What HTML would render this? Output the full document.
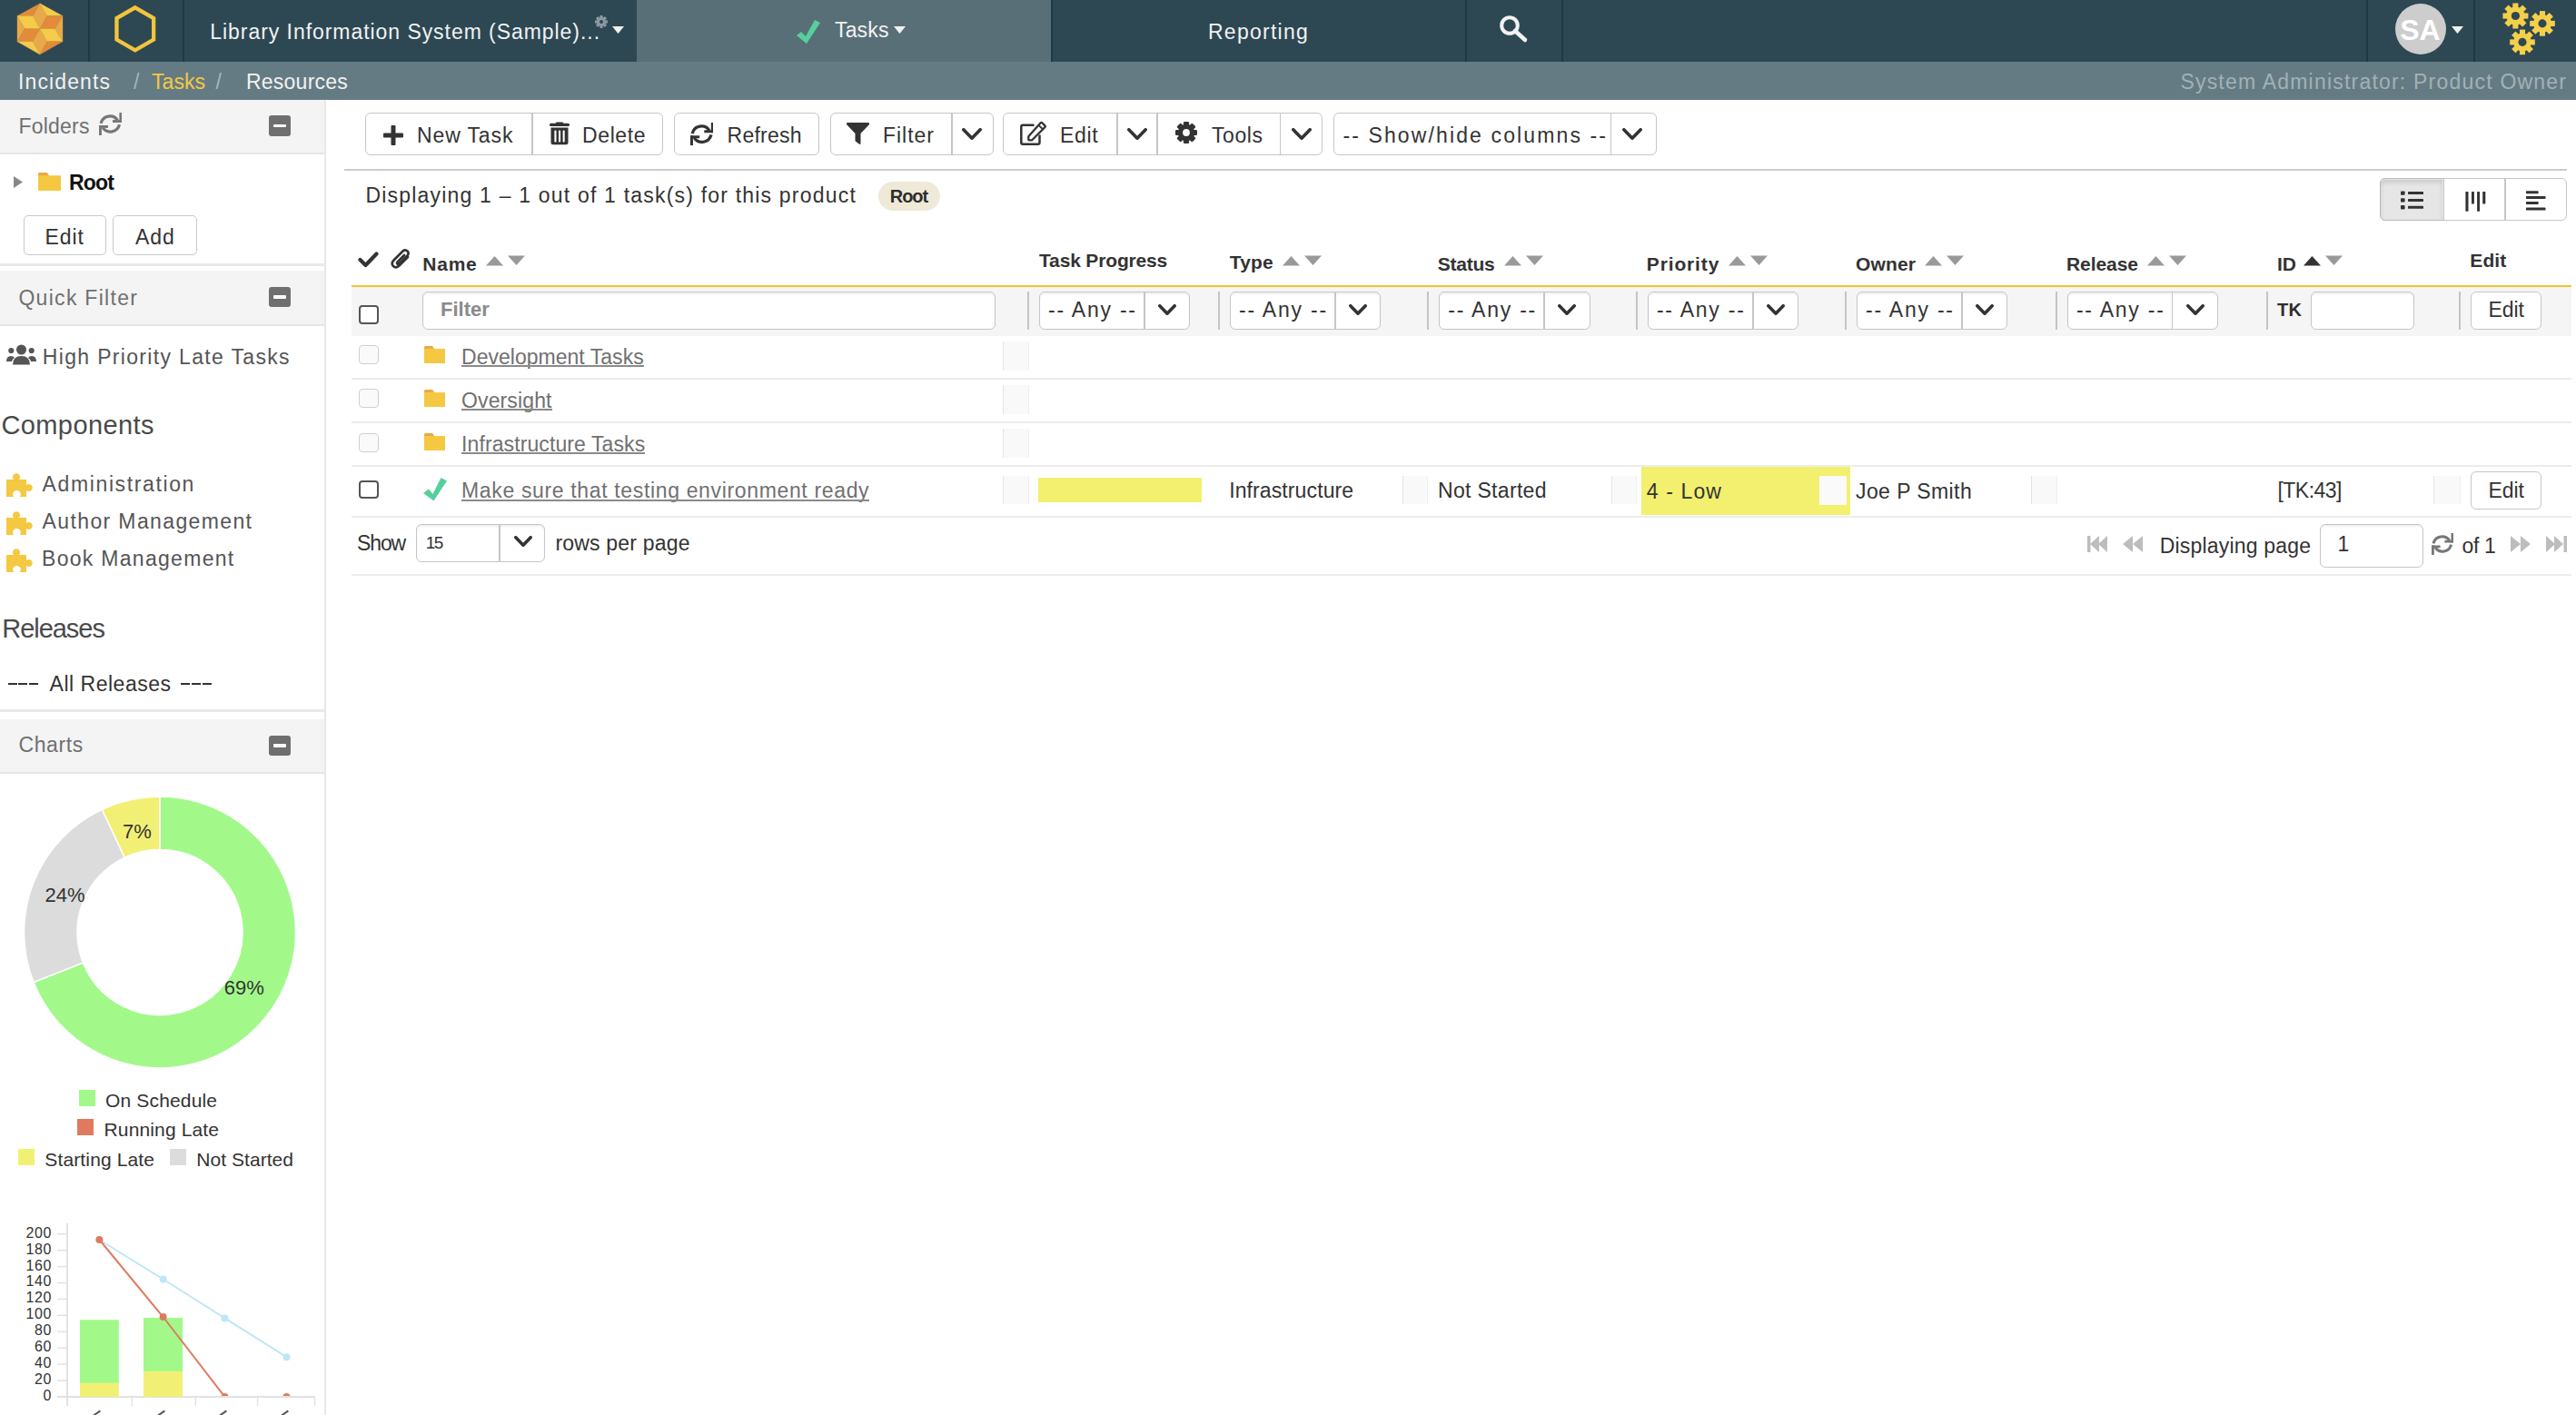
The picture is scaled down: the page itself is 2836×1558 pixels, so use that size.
<!DOCTYPE html><html><head><meta charset="utf-8"><style>
html,body{margin:0;padding:0;width:2836px;height:1558px;overflow:hidden;background:#fff;position:relative}
.t{position:absolute;white-space:nowrap;line-height:1;font-family:"Liberation Sans",sans-serif}
.r{position:absolute}
</style></head><body>
<div class="r" style="left:0px;top:0px;width:2836.00px;height:68.00px;background:#2d4853;"></div>
<div class="r" style="left:701px;top:0px;width:456.00px;height:68.00px;background:#586f78;"></div>
<div class="r" style="left:97px;top:0px;width:2.00px;height:68.00px;background:#1f3a46;"></div>
<div class="r" style="left:201px;top:0px;width:2.00px;height:68.00px;background:#1f3a46;"></div>
<div class="r" style="left:1157px;top:0px;width:2.00px;height:68.00px;background:#1f3a46;"></div>
<div class="r" style="left:1613px;top:0px;width:2.00px;height:68.00px;background:#1f3a46;"></div>
<div class="r" style="left:1719px;top:0px;width:2.00px;height:68.00px;background:#1f3a46;"></div>
<div class="r" style="left:2605px;top:0px;width:2.00px;height:68.00px;background:#1f3a46;"></div>
<div class="r" style="left:2723px;top:0px;width:2.00px;height:68.00px;background:#1f3a46;"></div>
<svg class="r" style="left:0px;top:0px;" width="90" height="68" viewBox="0 0 90 68"><polygon points="44,3.8 52,17.6 44,31.7 36,17.6" fill="#e8aa49" stroke="#e8aa49" stroke-width="0.3"/><polygon points="19,17.6 44,3.8 36,17.6" fill="#e38b3b" stroke="#e38b3b" stroke-width="0.3"/><polygon points="19,17.6 36,17.6 44,31.7 27.5,31.7" fill="#f4cc4a" stroke="#f4cc4a" stroke-width="0.3"/><polygon points="19,17.6 27.5,31.7 19,45.8" fill="#e8aa49" stroke="#e8aa49" stroke-width="0.3"/><polygon points="27.5,31.7 44,31.7 36,45.8 19,45.8" fill="#e38b3b" stroke="#e38b3b" stroke-width="0.3"/><polygon points="44,31.7 52,45.8 44,60 36,45.8" fill="#e8aa49" stroke="#e8aa49" stroke-width="0.3"/><polygon points="19,45.8 36,45.8 44,60" fill="#f4cc4a" stroke="#f4cc4a" stroke-width="0.3"/><polygon points="44,3.8 69,17.6 52,17.6" fill="#f4cc4a" stroke="#f4cc4a" stroke-width="0.3"/><polygon points="52,17.6 69,17.6 60.5,31.7 44,31.7" fill="#e38b3b" stroke="#e38b3b" stroke-width="0.3"/><polygon points="69,17.6 69,45.8 60.5,31.7" fill="#e8aa49" stroke="#e8aa49" stroke-width="0.3"/><polygon points="44,31.7 60.5,31.7 69,45.8 52,45.8" fill="#f4cc4a" stroke="#f4cc4a" stroke-width="0.3"/><polygon points="52,45.8 69,45.8 44,60" fill="#e38b3b" stroke="#e38b3b" stroke-width="0.3"/></svg>
<svg class="r" style="left:110px;top:0px;" width="80" height="68" viewBox="0 0 80 68"><polygon points="38.80,8.30 59.15,20.05 59.15,43.55 38.80,55.30 18.45,43.55 18.45,20.05" fill="none" stroke="#f2c53d" stroke-width="4.3"/></svg>
<div class="t" style="left:231.30px;top:24.00px;font-size:23px;font-weight:normal;color:#f2f2f2;letter-spacing:0.947px;">Library Information System (Sample)...</div>
<svg class="r" style="left:652px;top:14px;" width="20" height="20" viewBox="0 0 20 20"><g transform="translate(10,10)"><circle r="5" fill="#8a9aa1"/><rect x="-1.6" y="-7" width="3.2" height="3.5" fill="#8a9aa1" transform="rotate(0)"/><rect x="-1.6" y="-7" width="3.2" height="3.5" fill="#8a9aa1" transform="rotate(45)"/><rect x="-1.6" y="-7" width="3.2" height="3.5" fill="#8a9aa1" transform="rotate(90)"/><rect x="-1.6" y="-7" width="3.2" height="3.5" fill="#8a9aa1" transform="rotate(135)"/><rect x="-1.6" y="-7" width="3.2" height="3.5" fill="#8a9aa1" transform="rotate(180)"/><rect x="-1.6" y="-7" width="3.2" height="3.5" fill="#8a9aa1" transform="rotate(225)"/><rect x="-1.6" y="-7" width="3.2" height="3.5" fill="#8a9aa1" transform="rotate(270)"/><rect x="-1.6" y="-7" width="3.2" height="3.5" fill="#8a9aa1" transform="rotate(315)"/><circle r="2" fill="#2d4853"/></g></svg>
<svg class="r" style="left:674px;top:29px;" width="13" height="9" viewBox="0 0 13 9"><polygon points="0,0 13,0 6.5,8" fill="#f2f2f2"/></svg>
<svg class="r" style="left:876px;top:21px;" width="28" height="28" viewBox="0 0 28 28"><polygon points="1,18 6,14 11,19 21,1 27,4 12,27" fill="#56cf9c"/></svg>
<div class="t" style="left:919.00px;top:22.00px;font-size:23px;font-weight:normal;color:#f2f2f2;letter-spacing:0.146px;">Tasks</div>
<svg class="r" style="left:984px;top:29px;" width="13" height="9" viewBox="0 0 13 9"><polygon points="0,0 13,0 6.5,8" fill="#f2f2f2"/></svg>
<div class="t" style="left:1330.00px;top:24.00px;font-size:23px;font-weight:normal;color:#f2f2f2;letter-spacing:1.256px;">Reporting</div>
<svg class="r" style="left:1650px;top:16px;" width="34" height="32" viewBox="0 0 34 32"><circle cx="12" cy="12" r="8.8" fill="none" stroke="#f2f2f2" stroke-width="4"/><line x1="18" y1="18" x2="29" y2="28" stroke="#f2f2f2" stroke-width="4.5" stroke-linecap="round"/></svg>
<div class="r" style="left:2637px;top:4px;width:56px;height:56px;border-radius:50%;background:#cdcdcd"></div>
<div class="t" style="left:2642.28px;top:17.00px;font-size:32px;font-weight:bold;color:#ffffff;letter-spacing:0.000px;">SA</div>
<svg class="r" style="left:2699px;top:29px;" width="13" height="9" viewBox="0 0 13 9"><polygon points="0,0 13,0 6.5,8" fill="#f2f2f2"/></svg>
<svg class="r" style="left:2740px;top:0px;" width="96" height="68" viewBox="0 0 96 68"><g transform="translate(29.40000000000009,17.5)"><circle r="10.08" fill="#f4cf4a"/><rect x="-3.08" y="-14" width="6.16" height="7.0" fill="#f4cf4a" transform="rotate(0.0)"/><rect x="-3.08" y="-14" width="6.16" height="7.0" fill="#f4cf4a" transform="rotate(45.0)"/><rect x="-3.08" y="-14" width="6.16" height="7.0" fill="#f4cf4a" transform="rotate(90.0)"/><rect x="-3.08" y="-14" width="6.16" height="7.0" fill="#f4cf4a" transform="rotate(135.0)"/><rect x="-3.08" y="-14" width="6.16" height="7.0" fill="#f4cf4a" transform="rotate(180.0)"/><rect x="-3.08" y="-14" width="6.16" height="7.0" fill="#f4cf4a" transform="rotate(225.0)"/><rect x="-3.08" y="-14" width="6.16" height="7.0" fill="#f4cf4a" transform="rotate(270.0)"/><rect x="-3.08" y="-14" width="6.16" height="7.0" fill="#f4cf4a" transform="rotate(315.0)"/><circle r="4.62" fill="#2d4853"/></g><g transform="translate(59,25.9)"><circle r="9.936" fill="#f4cf4a"/><rect x="-3.036" y="-13.8" width="6.072" height="6.9" fill="#f4cf4a" transform="rotate(0.0)"/><rect x="-3.036" y="-13.8" width="6.072" height="6.9" fill="#f4cf4a" transform="rotate(45.0)"/><rect x="-3.036" y="-13.8" width="6.072" height="6.9" fill="#f4cf4a" transform="rotate(90.0)"/><rect x="-3.036" y="-13.8" width="6.072" height="6.9" fill="#f4cf4a" transform="rotate(135.0)"/><rect x="-3.036" y="-13.8" width="6.072" height="6.9" fill="#f4cf4a" transform="rotate(180.0)"/><rect x="-3.036" y="-13.8" width="6.072" height="6.9" fill="#f4cf4a" transform="rotate(225.0)"/><rect x="-3.036" y="-13.8" width="6.072" height="6.9" fill="#f4cf4a" transform="rotate(270.0)"/><rect x="-3.036" y="-13.8" width="6.072" height="6.9" fill="#f4cf4a" transform="rotate(315.0)"/><circle r="4.554" fill="#2d4853"/></g><g transform="translate(37,46.4)"><circle r="9.936" fill="#f4cf4a"/><rect x="-3.036" y="-13.8" width="6.072" height="6.9" fill="#f4cf4a" transform="rotate(0.0)"/><rect x="-3.036" y="-13.8" width="6.072" height="6.9" fill="#f4cf4a" transform="rotate(45.0)"/><rect x="-3.036" y="-13.8" width="6.072" height="6.9" fill="#f4cf4a" transform="rotate(90.0)"/><rect x="-3.036" y="-13.8" width="6.072" height="6.9" fill="#f4cf4a" transform="rotate(135.0)"/><rect x="-3.036" y="-13.8" width="6.072" height="6.9" fill="#f4cf4a" transform="rotate(180.0)"/><rect x="-3.036" y="-13.8" width="6.072" height="6.9" fill="#f4cf4a" transform="rotate(225.0)"/><rect x="-3.036" y="-13.8" width="6.072" height="6.9" fill="#f4cf4a" transform="rotate(270.0)"/><rect x="-3.036" y="-13.8" width="6.072" height="6.9" fill="#f4cf4a" transform="rotate(315.0)"/><circle r="4.554" fill="#2d4853"/></g></svg>
<div class="r" style="left:0px;top:68px;width:2836.00px;height:42.00px;background:#647b84;"></div>
<div class="t" style="left:20.00px;top:79.00px;font-size:23px;font-weight:normal;color:#f2f2f2;letter-spacing:1.117px;">Incidents</div>
<div class="t" style="left:147.00px;top:79.00px;font-size:23px;font-weight:normal;color:#a9b5b0;letter-spacing:0.000px;">/</div>
<div class="t" style="left:167.00px;top:79.00px;font-size:23px;font-weight:normal;color:#f5c842;letter-spacing:0.046px;">Tasks</div>
<div class="t" style="left:237.60px;top:79.00px;font-size:23px;font-weight:normal;color:#a9b5b0;letter-spacing:0.000px;">/</div>
<div class="t" style="left:271.00px;top:79.00px;font-size:23px;font-weight:normal;color:#f2f2f2;letter-spacing:0.233px;">Resources</div>
<div class="t" style="left:2400.40px;top:79.00px;font-size:23px;font-weight:normal;color:#a3b1b6;letter-spacing:1.209px;">System Administrator: Product Owner</div>
<div class="r" style="left:357px;top:110px;width:2.00px;height:1448.00px;background:#e8e8e8;"></div>
<div class="r" style="left:0px;top:110px;width:357.00px;height:58.00px;background:#f4f4f4;"></div>
<div class="r" style="left:0px;top:168px;width:357.00px;height:2.00px;background:#e6e6e6;"></div>
<div class="t" style="left:20.40px;top:128.00px;font-size:23px;font-weight:normal;color:#707070;letter-spacing:0.217px;">Folders</div>
<div class="r" style="left:296px;top:127px;width:23.50px;height:22.50px;box-sizing:border-box;background:#6f6f6f;border-radius:3px"></div>
<div class="r" style="left:301px;top:136.5px;width:13.50px;height:3.50px;background:#ffffff;border-radius:1px"></div>
<svg class="r" style="left:109.3px;top:124px;" width="25" height="25" viewBox="0 0 25 25"><g transform="scale(1.0000)"><path d="M2.1,11.8 A10.2,10.2 0 0 1 20.5,8.4" fill="none" stroke="#777" stroke-width="3.2"/><path d="M22.5,13.2 A10.2,10.2 0 0 1 4.2,16.6" fill="none" stroke="#777" stroke-width="3.2"/><rect x="22.4" y="0" width="2.6" height="11" fill="#777"/><rect x="15" y="8.1" width="10" height="2.9" fill="#777"/><rect x="0" y="14" width="2.9" height="11" fill="#777"/><rect x="0" y="14" width="10" height="2.9" fill="#777"/></g></svg>
<svg class="r" style="left:15px;top:194px;" width="11" height="14" viewBox="0 0 11 14"><polygon points="0,0 10,6.5 0,13" fill="#888"/></svg>
<svg class="r" style="left:41.5px;top:189.5px;" width="25.5" height="20" viewBox="0 0 25.5 20"><path d="M0 2 Q0 0 2 0 L9.7 0 L11.7 3.2 L24.5 3.2 Q25.5 3.2 25.5 5.2 L25.5 19 Q25.5 20 24.5 20 L1 20 Q0 20 0 19 Z" fill="#f5c842"/><path d="M0 2 Q0 0 2 0 L9.7 0 L11.7 3.2 L0 3.2 Z" fill="#eaa84a"/></svg>
<div class="t" style="left:76.00px;top:190.00px;font-size:23px;font-weight:bold;color:#111;letter-spacing:-0.860px;">Root</div>
<div class="r" style="left:25.5px;top:236.5px;width:91.00px;height:44.50px;box-sizing:border-box;border:1.5px solid #c9c9c9;border-radius:5px;background:#fff"></div>
<div class="t" style="left:49.50px;top:250.00px;font-size:23px;font-weight:normal;color:#333;letter-spacing:0.923px;">Edit</div>
<div class="r" style="left:123.5px;top:236.5px;width:93.00px;height:44.50px;box-sizing:border-box;border:1.5px solid #c9c9c9;border-radius:5px;background:#fff"></div>
<div class="t" style="left:149.00px;top:250.00px;font-size:23px;font-weight:normal;color:#333;letter-spacing:0.875px;">Add</div>
<div class="r" style="left:0px;top:290px;width:357.00px;height:3.00px;background:#e9e9e9;"></div>
<div class="r" style="left:0px;top:298px;width:357.00px;height:59.00px;background:#f4f4f4;"></div>
<div class="r" style="left:0px;top:357px;width:357.00px;height:2.00px;background:#e6e6e6;"></div>
<div class="t" style="left:20.40px;top:317.00px;font-size:23px;font-weight:normal;color:#707070;letter-spacing:1.299px;">Quick Filter</div>
<div class="r" style="left:296px;top:315.5px;width:23.50px;height:22.50px;box-sizing:border-box;background:#6f6f6f;border-radius:3px"></div>
<div class="r" style="left:301px;top:325.0px;width:13.50px;height:3.50px;background:#ffffff;border-radius:1px"></div>
<svg class="r" style="left:7px;top:379px;" width="33" height="23" viewBox="0 0 33 23"><g fill="#555"><circle cx="16.5" cy="6" r="5.5"/><circle cx="5.3" cy="7" r="3.1"/><circle cx="27.7" cy="7" r="3.1"/><path d="M7 22.5 Q7 13 16.5 13 Q26 13 26 22.5 Z"/><path d="M0 19 Q0 13 5 13 Q8 13 9 15 Q6 17 6 19 Z"/><path d="M33 19 Q33 13 28 13 Q25 13 24 15 Q27 17 27 19 Z"/></g></svg>
<div class="t" style="left:46.80px;top:382.00px;font-size:23px;font-weight:normal;color:#555;letter-spacing:1.331px;">High Priority Late Tasks</div>
<div class="t" style="left:1.40px;top:454.00px;font-size:29px;font-weight:normal;color:#4a4a4a;letter-spacing:0.417px;">Components</div>
<svg class="r" style="left:7px;top:521px;" width="31" height="26" viewBox="0 0 31 26"><path d="M0 7 L8 7 Q6 4 8 1.5 Q11 -1 14 1.5 Q16 4 14 7 L22 7 L22 13 Q25 11 27.5 13 Q30 16 27.5 19 Q25 21 22 19 L22 26 L15 26 Q17 22 14.5 20 Q11 18 8.5 20 Q6 22 8 26 L0 26 Z" fill="#f5c842"/></svg>
<div class="t" style="left:46.60px;top:522.00px;font-size:23px;font-weight:normal;color:#555;letter-spacing:1.619px;">Administration</div>
<svg class="r" style="left:7px;top:562.5px;" width="31" height="26" viewBox="0 0 31 26"><path d="M0 7 L8 7 Q6 4 8 1.5 Q11 -1 14 1.5 Q16 4 14 7 L22 7 L22 13 Q25 11 27.5 13 Q30 16 27.5 19 Q25 21 22 19 L22 26 L15 26 Q17 22 14.5 20 Q11 18 8.5 20 Q6 22 8 26 L0 26 Z" fill="#f5c842"/></svg>
<div class="t" style="left:46.60px;top:563.00px;font-size:23px;font-weight:normal;color:#555;letter-spacing:1.373px;">Author Management</div>
<svg class="r" style="left:7px;top:604px;" width="31" height="26" viewBox="0 0 31 26"><path d="M0 7 L8 7 Q6 4 8 1.5 Q11 -1 14 1.5 Q16 4 14 7 L22 7 L22 13 Q25 11 27.5 13 Q30 16 27.5 19 Q25 21 22 19 L22 26 L15 26 Q17 22 14.5 20 Q11 18 8.5 20 Q6 22 8 26 L0 26 Z" fill="#f5c842"/></svg>
<div class="t" style="left:46.00px;top:604.00px;font-size:23px;font-weight:normal;color:#555;letter-spacing:1.295px;">Book Management</div>
<div class="t" style="left:2.30px;top:678.00px;font-size:29px;font-weight:normal;color:#4a4a4a;letter-spacing:-1.040px;">Releases</div>
<div class="t" style="left:54.60px;top:742.00px;font-size:23px;font-weight:normal;color:#333;letter-spacing:0.508px;">All Releases</div>
<div class="r" style="left:8.5px;top:751.5px;width:10.00px;height:2.00px;background:#333;"></div>
<div class="r" style="left:20.1px;top:751.5px;width:10.00px;height:2.00px;background:#333;"></div>
<div class="r" style="left:31.7px;top:751.5px;width:10.00px;height:2.00px;background:#333;"></div>
<div class="r" style="left:199.3px;top:751.5px;width:10.00px;height:2.00px;background:#333;"></div>
<div class="r" style="left:210.9px;top:751.5px;width:10.00px;height:2.00px;background:#333;"></div>
<div class="r" style="left:222.5px;top:751.5px;width:10.00px;height:2.00px;background:#333;"></div>
<div class="r" style="left:0px;top:781px;width:357.00px;height:3.00px;background:#e9e9e9;"></div>
<div class="r" style="left:0px;top:792px;width:357.00px;height:58.00px;background:#f4f4f4;"></div>
<div class="r" style="left:0px;top:850px;width:357.00px;height:2.00px;background:#e6e6e6;"></div>
<div class="t" style="left:20.40px;top:809.00px;font-size:23px;font-weight:normal;color:#707070;letter-spacing:0.629px;">Charts</div>
<div class="r" style="left:296px;top:809.5px;width:23.50px;height:22.50px;box-sizing:border-box;background:#6f6f6f;border-radius:3px"></div>
<div class="r" style="left:301px;top:819.0px;width:13.50px;height:3.50px;background:#ffffff;border-radius:1px"></div>
<svg class="r" style="left:0px;top:850px;" width="357" height="400" viewBox="0 0 357 400"><g transform="translate(0,-850)"><path d="M176.00,877.00 A149.5,149.5 0 1 1 37.00,1081.53 L91.39,1060.00 A91,91 0 1 0 176.00,935.50 Z" fill="#a2f98a" stroke="#fff" stroke-width="1.5"/><path d="M37.00,1081.53 A149.5,149.5 0 0 1 112.35,891.23 L137.25,944.16 A91,91 0 0 0 91.39,1060.00 Z" fill="#dcdcdc" stroke="#fff" stroke-width="1.5"/><path d="M112.35,891.23 A149.5,149.5 0 0 1 176.00,877.00 L176.00,935.50 A91,91 0 0 0 137.25,944.16 Z" fill="#f2f074" stroke="#fff" stroke-width="1.5"/></g></svg>
<div class="t" style="left:135.09px;top:905.00px;font-size:22px;font-weight:normal;color:#333;letter-spacing:0.000px;">7%</div>
<div class="t" style="left:49.46px;top:975.00px;font-size:22px;font-weight:normal;color:#333;letter-spacing:0.000px;">24%</div>
<div class="t" style="left:246.76px;top:1077.00px;font-size:22px;font-weight:normal;color:#333;letter-spacing:0.000px;">69%</div>
<div class="r" style="left:87px;top:1200px;width:18.00px;height:18.00px;background:#a2f98a;"></div>
<div class="t" style="left:116.00px;top:1201.00px;font-size:21px;font-weight:normal;color:#333;letter-spacing:0.156px;">On Schedule</div>
<div class="r" style="left:85px;top:1232px;width:18.00px;height:18.00px;background:#e07a5f;"></div>
<div class="t" style="left:114.50px;top:1233.00px;font-size:21px;font-weight:normal;color:#333;letter-spacing:0.142px;">Running Late</div>
<div class="r" style="left:20px;top:1265px;width:18.00px;height:18.00px;background:#f2f074;"></div>
<div class="t" style="left:49.30px;top:1266.00px;font-size:21px;font-weight:normal;color:#333;letter-spacing:0.136px;">Starting Late</div>
<div class="r" style="left:187px;top:1265px;width:18.00px;height:18.00px;background:#dcdcdc;"></div>
<div class="t" style="left:216.30px;top:1266.00px;font-size:21px;font-weight:normal;color:#333;letter-spacing:0.044px;">Not Started</div>
<svg class="r" style="left:0px;top:1300px;" width="357" height="258" viewBox="0 0 357 258"><g transform="translate(0,-1300)"><line x1="74" y1="1347" x2="74" y2="1548" stroke="#e2e2e2" stroke-width="2"/><line x1="63" y1="1538" x2="347" y2="1538" stroke="#e2e2e2" stroke-width="2"/><line x1="63" y1="1538.0" x2="74" y2="1538.0" stroke="#e2e2e2" stroke-width="1.5"/><line x1="63" y1="1520.1" x2="74" y2="1520.1" stroke="#e2e2e2" stroke-width="1.5"/><line x1="63" y1="1502.1" x2="74" y2="1502.1" stroke="#e2e2e2" stroke-width="1.5"/><line x1="63" y1="1484.2" x2="74" y2="1484.2" stroke="#e2e2e2" stroke-width="1.5"/><line x1="63" y1="1466.3" x2="74" y2="1466.3" stroke="#e2e2e2" stroke-width="1.5"/><line x1="63" y1="1448.3" x2="74" y2="1448.3" stroke="#e2e2e2" stroke-width="1.5"/><line x1="63" y1="1430.4" x2="74" y2="1430.4" stroke="#e2e2e2" stroke-width="1.5"/><line x1="63" y1="1412.5" x2="74" y2="1412.5" stroke="#e2e2e2" stroke-width="1.5"/><line x1="63" y1="1394.6" x2="74" y2="1394.6" stroke="#e2e2e2" stroke-width="1.5"/><line x1="63" y1="1376.6" x2="74" y2="1376.6" stroke="#e2e2e2" stroke-width="1.5"/><line x1="63" y1="1358.7" x2="74" y2="1358.7" stroke="#e2e2e2" stroke-width="1.5"/><line x1="74" y1="1538" x2="74" y2="1548" stroke="#e2e2e2" stroke-width="1.5"/><line x1="145.4" y1="1538" x2="145.4" y2="1548" stroke="#e2e2e2" stroke-width="1.5"/><line x1="215.2" y1="1538" x2="215.2" y2="1548" stroke="#e2e2e2" stroke-width="1.5"/><line x1="283.6" y1="1538" x2="283.6" y2="1548" stroke="#e2e2e2" stroke-width="1.5"/><line x1="346.5" y1="1538" x2="346.5" y2="1548" stroke="#e2e2e2" stroke-width="1.5"/><rect x="88" y="1453.2" width="42.8" height="69.7" fill="#a2f98a"/><rect x="88" y="1522.9" width="42.8" height="15.1" fill="#f2f074"/><rect x="158" y="1451" width="43" height="59" fill="#a2f98a"/><rect x="158" y="1510" width="43" height="28" fill="#f2f074"/><polyline points="109.4,1365 179.6,1408.5 247.5,1451.4 315.5,1494.2" fill="none" stroke="#bfe6f8" stroke-width="2"/><circle cx="179.6" cy="1408.5" r="4" fill="#bfe6f8"/><circle cx="247.5" cy="1451.4" r="4" fill="#bfe6f8"/><circle cx="315.5" cy="1494.2" r="4" fill="#bfe6f8"/><defs><clipPath id="pc"><rect x="74" y="1340" width="280" height="197"/></clipPath></defs><g clip-path="url(#pc)"><polyline points="109.4,1365 179.6,1450 247.5,1538 315.5,1538" fill="none" stroke="#e07a5f" stroke-width="2"/><circle cx="109.4" cy="1365" r="4" fill="#e07a5f"/><circle cx="179.6" cy="1450" r="4" fill="#e07a5f"/><circle cx="247.5" cy="1538" r="4" fill="#e07a5f"/><circle cx="315.5" cy="1538" r="4" fill="#e07a5f"/></g><rect x="101" y="1553.5" width="10" height="2" fill="#555" transform="rotate(-35 109 1555)"/><rect x="172" y="1553.5" width="10" height="2" fill="#555" transform="rotate(-35 180 1555)"/><rect x="240" y="1553.5" width="10" height="2" fill="#555" transform="rotate(-35 248 1555)"/><rect x="308" y="1553.5" width="10" height="2" fill="#555" transform="rotate(-35 316 1555)"/></g></svg>
<div class="t" style="left:47.62px;top:1529.00px;font-size:16px;font-weight:normal;color:#333;letter-spacing:0.600px;">0</div>
<div class="t" style="left:38.09px;top:1511.00px;font-size:16px;font-weight:normal;color:#333;letter-spacing:0.600px;">20</div>
<div class="t" style="left:38.09px;top:1493.00px;font-size:16px;font-weight:normal;color:#333;letter-spacing:0.600px;">40</div>
<div class="t" style="left:38.09px;top:1475.00px;font-size:16px;font-weight:normal;color:#333;letter-spacing:0.600px;">60</div>
<div class="t" style="left:38.09px;top:1457.00px;font-size:16px;font-weight:normal;color:#333;letter-spacing:0.600px;">80</div>
<div class="t" style="left:28.60px;top:1439.00px;font-size:16px;font-weight:normal;color:#333;letter-spacing:0.600px;">100</div>
<div class="t" style="left:28.60px;top:1421.00px;font-size:16px;font-weight:normal;color:#333;letter-spacing:0.600px;">120</div>
<div class="t" style="left:28.60px;top:1403.00px;font-size:16px;font-weight:normal;color:#333;letter-spacing:0.600px;">140</div>
<div class="t" style="left:28.60px;top:1386.00px;font-size:16px;font-weight:normal;color:#333;letter-spacing:0.600px;">160</div>
<div class="t" style="left:28.60px;top:1368.00px;font-size:16px;font-weight:normal;color:#333;letter-spacing:0.600px;">180</div>
<div class="t" style="left:28.60px;top:1350.00px;font-size:16px;font-weight:normal;color:#333;letter-spacing:0.600px;">200</div>
<div class="r" style="left:401.8px;top:123.8px;width:328.40px;height:47.20px;box-sizing:border-box;border:1.75px solid #c6c6c6;border-radius:6px;background:#fff"></div>
<div class="r" style="left:585.25px;top:123.8px;width:1.50px;height:47.20px;background:#c6c6c6;"></div>
<svg class="r" style="left:422px;top:138px;" width="22" height="22" viewBox="0 0 22 22"><rect x="8.5" y="0" width="5" height="22" rx="1" fill="#333"/><rect x="0" y="8.5" width="22" height="5" rx="1" fill="#333"/></svg>
<div class="t" style="left:459.00px;top:138.00px;font-size:23px;font-weight:normal;color:#333;letter-spacing:0.875px;">New Task</div>
<svg class="r" style="left:604.5px;top:133.5px;" width="23" height="26" viewBox="0 0 23 26"><rect x="0" y="1.8" width="22" height="3.3" rx="1.5" fill="#333"/><rect x="6.8" y="0.4" width="8.4" height="2.8" rx="1.2" fill="#333"/><path d="M1.5 6.6 L20.5 6.6 L20.5 22.8 Q20.5 25.3 18 25.3 L4 25.3 Q1.5 25.3 1.5 22.8 Z" fill="#333"/><rect x="5.4" y="9.6" width="2.1" height="12.9" rx="0.8" fill="#fff"/><rect x="10" y="9.6" width="2.1" height="12.9" rx="0.8" fill="#fff"/><rect x="14.6" y="9.6" width="2.1" height="12.9" rx="0.8" fill="#fff"/></svg>
<div class="t" style="left:641.00px;top:138.00px;font-size:23px;font-weight:normal;color:#333;letter-spacing:0.621px;">Delete</div>
<div class="r" style="left:742px;top:123.8px;width:160.00px;height:47.20px;box-sizing:border-box;border:1.75px solid #c6c6c6;border-radius:6px;background:#fff"></div>
<svg class="r" style="left:759.5px;top:134.5px;" width="25.5" height="25.5" viewBox="0 0 25.5 25.5"><g transform="scale(1.0200)"><path d="M2.1,11.8 A10.2,10.2 0 0 1 20.5,8.4" fill="none" stroke="#333" stroke-width="3.2"/><path d="M22.5,13.2 A10.2,10.2 0 0 1 4.2,16.6" fill="none" stroke="#333" stroke-width="3.2"/><rect x="22.4" y="0" width="2.6" height="11" fill="#333"/><rect x="15" y="8.1" width="10" height="2.9" fill="#333"/><rect x="0" y="14" width="2.9" height="11" fill="#333"/><rect x="0" y="14" width="10" height="2.9" fill="#333"/></g></svg>
<div class="t" style="left:800.60px;top:138.00px;font-size:23px;font-weight:normal;color:#333;letter-spacing:0.221px;">Refresh</div>
<div class="r" style="left:913.8px;top:123.8px;width:180.20px;height:47.20px;box-sizing:border-box;border:1.75px solid #c6c6c6;border-radius:6px;background:#fff"></div>
<div class="r" style="left:1047.25px;top:123.8px;width:1.50px;height:47.20px;background:#c6c6c6;"></div>
<svg class="r" style="left:932px;top:135px;" width="25" height="24" viewBox="0 0 25 24"><path d="M0 1 Q0 0 1 0 L24 0 Q25 0 25 1 L25 2 L15.5 12 L15.5 23 Q15.5 24 14.5 24 L10.5 21 Q9.5 20.5 9.5 19.5 L9.5 12 L0 2 Z" fill="#333"/></svg>
<div class="t" style="left:972.00px;top:138.00px;font-size:23px;font-weight:normal;color:#333;letter-spacing:0.972px;">Filter</div>
<svg class="r" style="left:1059px;top:141px;" width="22" height="13" viewBox="0 0 22 13"><polyline points="1.8,1.8 11.0,11.2 20.2,1.8" fill="none" stroke="#333" stroke-width="3.6" stroke-linecap="round" stroke-linejoin="round"/></svg>
<div class="r" style="left:1103.8px;top:123.8px;width:351.90px;height:47.20px;box-sizing:border-box;border:1.75px solid #c6c6c6;border-radius:6px;background:#fff"></div>
<div class="r" style="left:1229.25px;top:123.8px;width:1.50px;height:47.20px;background:#c6c6c6;"></div>
<div class="r" style="left:1273.15px;top:123.8px;width:1.50px;height:47.20px;background:#c6c6c6;"></div>
<div class="r" style="left:1408.95px;top:123.8px;width:1.50px;height:47.20px;background:#c6c6c6;"></div>
<svg class="r" style="left:1123px;top:133px;" width="30" height="27" viewBox="0 0 30 27"><path d="M15.5 4.8 L3 4.8 Q1.3 4.8 1.3 6.5 L1.3 24 Q1.3 25.7 3 25.7 L19.8 25.7 Q21.5 25.7 21.5 24 L21.5 15.5" fill="none" stroke="#333" stroke-width="2.5"/><path d="M9.3 17.2 L9.3 20.6 Q9.3 21.3 10 21.3 L13.2 21.3 L27.2 7.3 Q28.3 6.2 27.2 5.1 L24.6 2.5 Q23.5 1.4 22.4 2.5 Z" fill="none" stroke="#333" stroke-width="2.3" stroke-linejoin="round"/><line x1="20.3" y1="4.6" x2="25.1" y2="9.4" stroke="#333" stroke-width="2"/></svg>
<div class="t" style="left:1167.00px;top:138.00px;font-size:23px;font-weight:normal;color:#333;letter-spacing:0.656px;">Edit</div>
<svg class="r" style="left:1240.8px;top:141px;" width="22" height="13" viewBox="0 0 22 13"><polyline points="1.8,1.8 11.0,11.2 20.2,1.8" fill="none" stroke="#333" stroke-width="3.6" stroke-linecap="round" stroke-linejoin="round"/></svg>
<svg class="r" style="left:1294.4px;top:134.3px;" width="24" height="24" viewBox="0 0 24 24"><g transform="translate(12,12)"><circle r="9.2" fill="#333"/><rect x="-3.1" y="-12" width="6.2" height="5" rx="1.3" fill="#333" transform="rotate(0)"/><rect x="-3.1" y="-12" width="6.2" height="5" rx="1.3" fill="#333" transform="rotate(45)"/><rect x="-3.1" y="-12" width="6.2" height="5" rx="1.3" fill="#333" transform="rotate(90)"/><rect x="-3.1" y="-12" width="6.2" height="5" rx="1.3" fill="#333" transform="rotate(135)"/><rect x="-3.1" y="-12" width="6.2" height="5" rx="1.3" fill="#333" transform="rotate(180)"/><rect x="-3.1" y="-12" width="6.2" height="5" rx="1.3" fill="#333" transform="rotate(225)"/><rect x="-3.1" y="-12" width="6.2" height="5" rx="1.3" fill="#333" transform="rotate(270)"/><rect x="-3.1" y="-12" width="6.2" height="5" rx="1.3" fill="#333" transform="rotate(315)"/><circle r="3.9" fill="#fff"/></g></svg>
<div class="t" style="left:1334.00px;top:138.00px;font-size:23px;font-weight:normal;color:#333;letter-spacing:0.576px;">Tools</div>
<svg class="r" style="left:1421.8px;top:141px;" width="22" height="13" viewBox="0 0 22 13"><polyline points="1.8,1.8 11.0,11.2 20.2,1.8" fill="none" stroke="#333" stroke-width="3.6" stroke-linecap="round" stroke-linejoin="round"/></svg>
<div class="r" style="left:1467.8px;top:123.8px;width:356.20px;height:47.20px;box-sizing:border-box;border:1.75px solid #c6c6c6;border-radius:6px;background:#fff"></div>
<div class="r" style="left:1772.95px;top:123.8px;width:1.50px;height:47.20px;background:#c6c6c6;"></div>
<div class="t" style="left:1478.40px;top:138.00px;font-size:23px;font-weight:normal;color:#333;letter-spacing:2.124px;">-- Show/hide columns --</div>
<svg class="r" style="left:1786px;top:141px;" width="22" height="13" viewBox="0 0 22 13"><polyline points="1.8,1.8 11.0,11.2 20.2,1.8" fill="none" stroke="#333" stroke-width="3.6" stroke-linecap="round" stroke-linejoin="round"/></svg>
<div class="r" style="left:379px;top:186px;width:2447.00px;height:2.00px;background:#cccccc;"></div>
<div class="t" style="left:402.40px;top:204.00px;font-size:23px;font-weight:normal;color:#333;letter-spacing:1.198px;">Displaying 1 – 1 out of 1 task(s) for this product</div>
<div class="r" style="left:967px;top:200px;width:67.6px;height:32px;border-radius:16px;background:#efead8"></div>
<div class="t" style="left:979.80px;top:206.00px;font-size:20px;font-weight:bold;color:#2e2e2e;letter-spacing:-1.057px;">Root</div>
<div class="r" style="left:2619.5px;top:196.4px;width:206.50px;height:46.40px;box-sizing:border-box;border:1.75px solid #c6c6c6;border-radius:6px;background:#fff"></div>
<div class="r" style="left:2619.5px;top:196.4px;width:71px;height:46.4px;box-sizing:border-box;border:1.75px solid #b9b9b9;border-radius:6px 0 0 6px;background:#e6e6e6"></div>
<div class="r" style="left:2689.75px;top:196.4px;width:1.50px;height:46.40px;background:#c6c6c6;"></div>
<div class="r" style="left:2757.25px;top:196.4px;width:1.50px;height:46.40px;background:#c6c6c6;"></div>
<svg class="r" style="left:2643px;top:209px;" width="26" height="24" viewBox="0 0 26 24"><rect x="0" y="1.4" width="4.6" height="4.3" rx="0.8" fill="#333"/><rect x="0" y="9.2" width="4.6" height="4.3" rx="0.8" fill="#333"/><rect x="0" y="17.1" width="4.6" height="4.3" rx="0.8" fill="#333"/><rect x="8" y="2" width="17" height="3" rx="0.6" fill="#333"/><rect x="8" y="9.9" width="17" height="3" rx="0.6" fill="#333"/><rect x="8" y="17.8" width="17" height="3" rx="0.6" fill="#333"/></svg>
<svg class="r" style="left:2714px;top:210px;" width="24" height="24" viewBox="0 0 24 24"><rect x="0.4" y="1" width="3.1" height="21.7" rx="0.5" fill="#333"/><rect x="7" y="1" width="2.9" height="13.6" rx="0.5" fill="#333"/><rect x="13.1" y="1" width="2.9" height="21.7" rx="0.5" fill="#333"/><rect x="19.2" y="1" width="3.1" height="13.6" rx="0.5" fill="#333"/></svg>
<svg class="r" style="left:2781px;top:209px;" width="23" height="24" viewBox="0 0 23 24"><rect x="0" y="1.3" width="13.6" height="3" rx="0.6" fill="#333"/><rect x="0" y="6.9" width="21.5" height="3" rx="0.6" fill="#333"/><rect x="0" y="13" width="13.6" height="3" rx="0.6" fill="#333"/><rect x="0" y="19.6" width="21.5" height="3" rx="0.6" fill="#333"/></svg>
<div class="r" style="left:2621px;top:198px;width:68px;height:43px;border-radius:5px 0 0 5px;box-shadow:inset 0 3px 5px rgba(0,0,0,.12)"></div>
<svg class="r" style="left:394px;top:277px;" width="23" height="18" viewBox="0 0 23 18"><polyline points="2.5,9 8.5,15 20.5,2.5" fill="none" stroke="#333" stroke-width="4.2" stroke-linejoin="round" stroke-linecap="round"/></svg>
<svg class="r" style="left:430px;top:274px;" width="24" height="22" viewBox="0 0 24 22"><path d="M19 9 L10 18 Q6 22 3 19 Q0 16 4 12 L13 3 Q16 0 18.5 2.5 Q21 5 18 8 L10 16 Q8.5 17.5 7.5 16.5 Q6.5 15.5 8 14 L15 7" fill="none" stroke="#333" stroke-width="2.6" stroke-linecap="round"/></svg>
<div class="t" style="left:465.20px;top:280.00px;font-size:21px;font-weight:bold;color:#333;letter-spacing:0.803px;">Name</div>
<svg class="r" style="left:535px;top:281px;" width="44" height="12" viewBox="0 0 44 12"><polygon points="0,11.5 9.5,1 19,11.5" fill="#999"/><polygon points="24,0.5 43,0.5 33.5,11" fill="#999"/></svg>
<div class="t" style="left:1144.00px;top:276.00px;font-size:21px;font-weight:bold;color:#333;letter-spacing:-0.157px;">Task Progress</div>
<div class="t" style="left:1353.70px;top:278.00px;font-size:21px;font-weight:bold;color:#333;letter-spacing:0.184px;">Type</div>
<svg class="r" style="left:1411.7px;top:281px;" width="44" height="12" viewBox="0 0 44 12"><polygon points="0,11.5 9.5,1 19,11.5" fill="#999"/><polygon points="24,0.5 43,0.5 33.5,11" fill="#999"/></svg>
<div class="t" style="left:1582.70px;top:280.00px;font-size:21px;font-weight:bold;color:#333;letter-spacing:-0.239px;">Status</div>
<svg class="r" style="left:1656px;top:281px;" width="44" height="12" viewBox="0 0 44 12"><polygon points="0,11.5 9.5,1 19,11.5" fill="#999"/><polygon points="24,0.5 43,0.5 33.5,11" fill="#999"/></svg>
<div class="t" style="left:1812.80px;top:280.00px;font-size:21px;font-weight:bold;color:#333;letter-spacing:0.856px;">Priority</div>
<svg class="r" style="left:1903px;top:281px;" width="44" height="12" viewBox="0 0 44 12"><polygon points="0,11.5 9.5,1 19,11.5" fill="#999"/><polygon points="24,0.5 43,0.5 33.5,11" fill="#999"/></svg>
<div class="t" style="left:2043.00px;top:280.00px;font-size:21px;font-weight:bold;color:#333;letter-spacing:0.154px;">Owner</div>
<svg class="r" style="left:2119px;top:281px;" width="44" height="12" viewBox="0 0 44 12"><polygon points="0,11.5 9.5,1 19,11.5" fill="#999"/><polygon points="24,0.5 43,0.5 33.5,11" fill="#999"/></svg>
<div class="t" style="left:2275.00px;top:280.00px;font-size:21px;font-weight:bold;color:#333;letter-spacing:-0.064px;">Release</div>
<svg class="r" style="left:2364px;top:281px;" width="44" height="12" viewBox="0 0 44 12"><polygon points="0,11.5 9.5,1 19,11.5" fill="#999"/><polygon points="24,0.5 43,0.5 33.5,11" fill="#999"/></svg>
<div class="t" style="left:2507.00px;top:280.00px;font-size:21px;font-weight:bold;color:#333;letter-spacing:0.000px;">ID</div>
<svg class="r" style="left:2536px;top:281px;" width="44" height="12" viewBox="0 0 44 12"><polygon points="0,11.5 9.5,1 19,11.5" fill="#333"/><polygon points="24,0.5 43,0.5 33.5,11" fill="#999"/></svg>
<div class="t" style="left:2719.30px;top:276.00px;font-size:21px;font-weight:bold;color:#333;letter-spacing:0.101px;">Edit</div>
<div class="r" style="left:387px;top:314px;width:2444.00px;height:2.00px;background:#f5c431;"></div>
<div class="r" style="left:387px;top:316px;width:2444.00px;height:54.00px;background:#f5f5f5;"></div>
<div class="r" style="left:395px;top:336.3px;width:21.60px;height:21.20px;box-sizing:border-box;border:2px solid #555;border-radius:4px;background:#fff"></div>
<div class="r" style="left:465.3px;top:320.6px;width:631.20px;height:42.20px;box-sizing:border-box;border:1.75px solid #c6c6c6;border-radius:6px;background:#fff;box-shadow:inset 0 2px 2px rgba(0,0,0,.06)"></div>
<div class="t" style="left:485.00px;top:330.00px;font-size:22px;font-weight:bold;color:#8a8a8a;letter-spacing:-0.005px;">Filter</div>
<div class="r" style="left:1130.6px;top:320.6px;width:2.00px;height:42.80px;background:#c4c4c4;"></div>
<div class="r" style="left:1341px;top:320.6px;width:2.00px;height:42.80px;background:#c4c4c4;"></div>
<div class="r" style="left:1571px;top:320.6px;width:2.00px;height:42.80px;background:#c4c4c4;"></div>
<div class="r" style="left:1801.3px;top:320.6px;width:2.00px;height:42.80px;background:#c4c4c4;"></div>
<div class="r" style="left:2031px;top:320.6px;width:2.00px;height:42.80px;background:#c4c4c4;"></div>
<div class="r" style="left:2263px;top:320.6px;width:2.00px;height:42.80px;background:#c4c4c4;"></div>
<div class="r" style="left:2495px;top:320.6px;width:2.00px;height:42.80px;background:#c4c4c4;"></div>
<div class="r" style="left:2707.2px;top:320.6px;width:2.00px;height:42.80px;background:#c4c4c4;"></div>
<div class="r" style="left:1143.7px;top:320.6px;width:166.30px;height:42.40px;box-sizing:border-box;border:1.75px solid #c6c6c6;border-radius:6px;background:#fff;box-shadow:inset 0 2px 2px rgba(0,0,0,.06)"></div>
<div class="r" style="left:1259.45px;top:320.6px;width:1.50px;height:42.40px;background:#c6c6c6;"></div>
<div class="t" style="left:1154.00px;top:330.00px;font-size:23px;font-weight:normal;color:#333;letter-spacing:1.774px;">-- Any --</div>
<svg class="r" style="left:1275.1px;top:334.5px;" width="20" height="12" viewBox="0 0 20 12"><polyline points="1.8,1.8 10.0,10.2 18.2,1.8" fill="none" stroke="#333" stroke-width="3.6" stroke-linecap="round" stroke-linejoin="round"/></svg>
<div class="r" style="left:1353.8px;top:320.6px;width:166.20px;height:42.40px;box-sizing:border-box;border:1.75px solid #c6c6c6;border-radius:6px;background:#fff;box-shadow:inset 0 2px 2px rgba(0,0,0,.06)"></div>
<div class="r" style="left:1469.25px;top:320.6px;width:1.50px;height:42.40px;background:#c6c6c6;"></div>
<div class="t" style="left:1364.10px;top:330.00px;font-size:23px;font-weight:normal;color:#333;letter-spacing:1.774px;">-- Any --</div>
<svg class="r" style="left:1485.0px;top:334.5px;" width="20" height="12" viewBox="0 0 20 12"><polyline points="1.8,1.8 10.0,10.2 18.2,1.8" fill="none" stroke="#333" stroke-width="3.6" stroke-linecap="round" stroke-linejoin="round"/></svg>
<div class="r" style="left:1584px;top:320.6px;width:166.60px;height:42.40px;box-sizing:border-box;border:1.75px solid #c6c6c6;border-radius:6px;background:#fff;box-shadow:inset 0 2px 2px rgba(0,0,0,.06)"></div>
<div class="r" style="left:1699.25px;top:320.6px;width:1.50px;height:42.40px;background:#c6c6c6;"></div>
<div class="t" style="left:1594.30px;top:330.00px;font-size:23px;font-weight:normal;color:#333;letter-spacing:1.774px;">-- Any --</div>
<svg class="r" style="left:1715.3px;top:334.5px;" width="20" height="12" viewBox="0 0 20 12"><polyline points="1.8,1.8 10.0,10.2 18.2,1.8" fill="none" stroke="#333" stroke-width="3.6" stroke-linecap="round" stroke-linejoin="round"/></svg>
<div class="r" style="left:1813.6px;top:320.6px;width:166.40px;height:42.40px;box-sizing:border-box;border:1.75px solid #c6c6c6;border-radius:6px;background:#fff;box-shadow:inset 0 2px 2px rgba(0,0,0,.06)"></div>
<div class="r" style="left:1929.05px;top:320.6px;width:1.50px;height:42.40px;background:#c6c6c6;"></div>
<div class="t" style="left:1823.90px;top:330.00px;font-size:23px;font-weight:normal;color:#333;letter-spacing:1.774px;">-- Any --</div>
<svg class="r" style="left:1944.9px;top:334.5px;" width="20" height="12" viewBox="0 0 20 12"><polyline points="1.8,1.8 10.0,10.2 18.2,1.8" fill="none" stroke="#333" stroke-width="3.6" stroke-linecap="round" stroke-linejoin="round"/></svg>
<div class="r" style="left:2043.7px;top:320.6px;width:166.30px;height:42.40px;box-sizing:border-box;border:1.75px solid #c6c6c6;border-radius:6px;background:#fff;box-shadow:inset 0 2px 2px rgba(0,0,0,.06)"></div>
<div class="r" style="left:2159.25px;top:320.6px;width:1.50px;height:42.40px;background:#c6c6c6;"></div>
<div class="t" style="left:2054.00px;top:330.00px;font-size:23px;font-weight:normal;color:#333;letter-spacing:1.774px;">-- Any --</div>
<svg class="r" style="left:2175.0px;top:334.5px;" width="20" height="12" viewBox="0 0 20 12"><polyline points="1.8,1.8 10.0,10.2 18.2,1.8" fill="none" stroke="#333" stroke-width="3.6" stroke-linecap="round" stroke-linejoin="round"/></svg>
<div class="r" style="left:2275.6px;top:320.6px;width:166.60px;height:42.40px;box-sizing:border-box;border:1.75px solid #c6c6c6;border-radius:6px;background:#fff;box-shadow:inset 0 2px 2px rgba(0,0,0,.06)"></div>
<div class="r" style="left:2390.95px;top:320.6px;width:1.50px;height:42.40px;background:#c6c6c6;"></div>
<div class="t" style="left:2285.90px;top:330.00px;font-size:23px;font-weight:normal;color:#333;letter-spacing:1.774px;">-- Any --</div>
<svg class="r" style="left:2406.95px;top:334.5px;" width="20" height="12" viewBox="0 0 20 12"><polyline points="1.8,1.8 10.0,10.2 18.2,1.8" fill="none" stroke="#333" stroke-width="3.6" stroke-linecap="round" stroke-linejoin="round"/></svg>
<div class="t" style="left:2507.00px;top:331.00px;font-size:20px;font-weight:bold;color:#2e2e2e;letter-spacing:0.300px;">TK</div>
<div class="r" style="left:2543.6px;top:321px;width:114.90px;height:42.20px;box-sizing:border-box;border:1.75px solid #c6c6c6;border-radius:6px;background:#fff;box-shadow:inset 0 2px 2px rgba(0,0,0,.06)"></div>
<div class="r" style="left:2719.5px;top:321px;width:78.80px;height:42.00px;box-sizing:border-box;border:1.75px solid #c6c6c6;border-radius:6px;background:#fff"></div>
<div class="t" style="left:2739.50px;top:330.00px;font-size:23px;font-weight:normal;color:#333;letter-spacing:-0.044px;">Edit</div>
<div class="r" style="left:387px;top:416px;width:2444.00px;height:2.00px;background:#ececec;"></div>
<div class="r" style="left:387px;top:464px;width:2444.00px;height:2.00px;background:#ececec;"></div>
<div class="r" style="left:387px;top:512px;width:2444.00px;height:2.00px;background:#ececec;"></div>
<div class="r" style="left:387px;top:568px;width:2444.00px;height:2.00px;background:#ececec;"></div>
<div class="r" style="left:387px;top:632px;width:2444.00px;height:2.00px;background:#ececec;"></div>
<div class="r" style="left:395px;top:380.3px;width:21.60px;height:21.00px;box-sizing:border-box;border:1.5px solid #cfcfcf;border-radius:4px;background:#fafafa"></div>
<svg class="r" style="left:466.8px;top:381.0px;" width="23.6" height="19.3" viewBox="0 0 23.6 19.3"><path d="M0 2 Q0 0 2 0 L9.0 0 L10.9 3.1 L22.6 3.1 Q23.6 3.1 23.6 5.0 L23.6 18.3 Q23.6 19.3 22.6 19.3 L1 19.3 Q0 19.3 0 18.3 Z" fill="#f5c842"/><path d="M0 2 Q0 0 2 0 L9.0 0 L10.9 3.1 L0 3.1 Z" fill="#eaa84a"/></svg>
<div class="t" style="left:508.00px;top:382.00px;font-size:23px;font-weight:normal;color:#707070;letter-spacing:0.024px;">Development Tasks</div>
<div class="r" style="left:508px;top:402px;width:200.70px;height:2.00px;background:#8a8a8a;"></div>
<div class="r" style="left:1103.5px;top:376px;width:29.00px;height:32.00px;background:#f9f9f9;border-left:1.5px solid #e4e4e4;border-right:1px solid #efefef;box-sizing:border-box"></div>
<div class="r" style="left:395px;top:428.4px;width:21.60px;height:21.00px;box-sizing:border-box;border:1.5px solid #cfcfcf;border-radius:4px;background:#fafafa"></div>
<svg class="r" style="left:466.8px;top:429.09999999999997px;" width="23.6" height="19.3" viewBox="0 0 23.6 19.3"><path d="M0 2 Q0 0 2 0 L9.0 0 L10.9 3.1 L22.6 3.1 Q23.6 3.1 23.6 5.0 L23.6 18.3 Q23.6 19.3 22.6 19.3 L1 19.3 Q0 19.3 0 18.3 Z" fill="#f5c842"/><path d="M0 2 Q0 0 2 0 L9.0 0 L10.9 3.1 L0 3.1 Z" fill="#eaa84a"/></svg>
<div class="t" style="left:508.00px;top:430.00px;font-size:23px;font-weight:normal;color:#707070;letter-spacing:0.131px;">Oversight</div>
<div class="r" style="left:508px;top:450px;width:99.50px;height:2.00px;background:#8a8a8a;"></div>
<div class="r" style="left:1103.5px;top:424px;width:29.00px;height:32.00px;background:#f9f9f9;border-left:1.5px solid #e4e4e4;border-right:1px solid #efefef;box-sizing:border-box"></div>
<div class="r" style="left:395px;top:476.5px;width:21.60px;height:21.00px;box-sizing:border-box;border:1.5px solid #cfcfcf;border-radius:4px;background:#fafafa"></div>
<svg class="r" style="left:466.8px;top:477.2px;" width="23.6" height="19.3" viewBox="0 0 23.6 19.3"><path d="M0 2 Q0 0 2 0 L9.0 0 L10.9 3.1 L22.6 3.1 Q23.6 3.1 23.6 5.0 L23.6 18.3 Q23.6 19.3 22.6 19.3 L1 19.3 Q0 19.3 0 18.3 Z" fill="#f5c842"/><path d="M0 2 Q0 0 2 0 L9.0 0 L10.9 3.1 L0 3.1 Z" fill="#eaa84a"/></svg>
<div class="t" style="left:508.00px;top:477.50px;font-size:23px;font-weight:normal;color:#707070;letter-spacing:0.103px;">Infrastructure Tasks</div>
<div class="r" style="left:508px;top:497.5px;width:202.20px;height:2.00px;background:#8a8a8a;"></div>
<div class="r" style="left:1103.5px;top:472px;width:29.00px;height:32.00px;background:#f9f9f9;border-left:1.5px solid #e4e4e4;border-right:1px solid #efefef;box-sizing:border-box"></div>
<div class="r" style="left:395px;top:528.7px;width:21.60px;height:20.60px;box-sizing:border-box;border:2px solid #555;border-radius:4px;background:#fff"></div>
<svg class="r" style="left:466px;top:526px;" width="26" height="26" viewBox="0 0 26 26"><polygon points="0,17 6,12.5 10.5,18 19.5,0 26,3.5 11.5,25.5" fill="#56cf9c"/></svg>
<div class="t" style="left:508.00px;top:529.00px;font-size:23px;font-weight:normal;color:#707070;letter-spacing:0.652px;">Make sure that testing environment ready</div>
<div class="r" style="left:508px;top:549.5px;width:448.60px;height:2.00px;background:#8a8a8a;"></div>
<div class="r" style="left:1103.5px;top:524px;width:29.00px;height:31.00px;background:#f9f9f9;border-left:1.5px solid #e4e4e4;border-right:1px solid #efefef;box-sizing:border-box"></div>
<div class="r" style="left:1143.4px;top:526.3px;width:179.40px;height:26.90px;background:#f2f06e;"></div>
<div class="t" style="left:1353.20px;top:529.00px;font-size:23px;font-weight:normal;color:#333;letter-spacing:0.108px;">Infrastructure</div>
<div class="r" style="left:1543.5px;top:524px;width:28.50px;height:31.00px;background:#f9f9f9;border-left:1.5px solid #e4e4e4;border-right:1px solid #efefef;box-sizing:border-box"></div>
<div class="t" style="left:1583.00px;top:529.00px;font-size:23px;font-weight:normal;color:#333;letter-spacing:0.318px;">Not Started</div>
<div class="r" style="left:1773.6px;top:524px;width:28.70px;height:31.00px;background:#f9f9f9;border-left:1.5px solid #e4e4e4;border-right:1px solid #efefef;box-sizing:border-box"></div>
<div class="r" style="left:1806.9px;top:513.8px;width:230.10px;height:53.70px;background:#f2f06e;"></div>
<div class="r" style="left:2002.9px;top:524px;width:30.10px;height:32.00px;background:#fafafa;"></div>
<div class="t" style="left:1812.80px;top:530.00px;font-size:23px;font-weight:normal;color:#333;letter-spacing:1.115px;">4 - Low</div>
<div class="t" style="left:2043.00px;top:530.00px;font-size:23px;font-weight:normal;color:#333;letter-spacing:0.413px;">Joe P Smith</div>
<div class="r" style="left:2235.7px;top:524px;width:29.00px;height:31.00px;background:#f9f9f9;border-left:1.5px solid #e4e4e4;border-right:1px solid #efefef;box-sizing:border-box"></div>
<div class="t" style="left:2507.50px;top:529.00px;font-size:23px;font-weight:normal;color:#333;letter-spacing:-0.539px;">[TK:43]</div>
<div class="r" style="left:2679.4px;top:524px;width:29.30px;height:31.00px;background:#f9f9f9;border-left:1.5px solid #e4e4e4;border-right:1px solid #efefef;box-sizing:border-box"></div>
<div class="r" style="left:2719.5px;top:518.7px;width:78.80px;height:42.10px;box-sizing:border-box;border:1.75px solid #c6c6c6;border-radius:6px;background:#fff"></div>
<div class="t" style="left:2739.50px;top:529.00px;font-size:23px;font-weight:normal;color:#333;letter-spacing:-0.044px;">Edit</div>
<div class="t" style="left:393.00px;top:587.00px;font-size:23px;font-weight:normal;color:#333;letter-spacing:-1.112px;">Show</div>
<div class="r" style="left:458px;top:576.8px;width:142.00px;height:41.90px;box-sizing:border-box;border:1.75px solid #c6c6c6;border-radius:6px;background:#fff;box-shadow:inset 0 2px 2px rgba(0,0,0,.06)"></div>
<div class="r" style="left:549.25px;top:576.8px;width:1.50px;height:41.90px;background:#c6c6c6;"></div>
<div class="t" style="left:468.80px;top:588.00px;font-size:19px;font-weight:normal;color:#333;letter-spacing:-1.500px;">15</div>
<svg class="r" style="left:565.5px;top:590px;" width="20" height="12" viewBox="0 0 20 12"><polyline points="1.8,1.8 10.0,10.2 18.2,1.8" fill="none" stroke="#333" stroke-width="3.6" stroke-linecap="round" stroke-linejoin="round"/></svg>
<div class="t" style="left:611.40px;top:587.00px;font-size:23px;font-weight:normal;color:#333;letter-spacing:0.196px;">rows per page</div>
<svg class="r" style="left:2298px;top:590px;" width="24" height="18" viewBox="0 0 24 18"><rect x="0" y="0" width="3.5" height="18" fill="#bdbdbd"/><polygon points="3,9 13,0 13,18" fill="#bdbdbd"/><polygon points="12,9 22,0 22,18" fill="#bdbdbd"/></svg>
<svg class="r" style="left:2337px;top:590px;" width="24" height="18" viewBox="0 0 24 18"><polygon points="0,9 11,0 11,18" fill="#bdbdbd"/><polygon points="11,9 22,0 22,18" fill="#bdbdbd"/></svg>
<div class="t" style="left:2377.80px;top:590.00px;font-size:23px;font-weight:normal;color:#333;letter-spacing:0.179px;">Displaying page</div>
<div class="r" style="left:2553.7px;top:576.9px;width:114.30px;height:48.10px;box-sizing:border-box;border:1.75px solid #c6c6c6;border-radius:6px;background:#fff;box-shadow:inset 0 2px 2px rgba(0,0,0,.06)"></div>
<div class="t" style="left:2573.60px;top:588.00px;font-size:23px;font-weight:normal;color:#333;letter-spacing:0.000px;">1</div>
<svg class="r" style="left:2677px;top:587px;" width="24" height="24" viewBox="0 0 24 24"><g transform="scale(0.9600)"><path d="M2.1,11.8 A10.2,10.2 0 0 1 20.5,8.4" fill="none" stroke="#777" stroke-width="3.2"/><path d="M22.5,13.2 A10.2,10.2 0 0 1 4.2,16.6" fill="none" stroke="#777" stroke-width="3.2"/><rect x="22.4" y="0" width="2.6" height="11" fill="#777"/><rect x="15" y="8.1" width="10" height="2.9" fill="#777"/><rect x="0" y="14" width="2.9" height="11" fill="#777"/><rect x="0" y="14" width="10" height="2.9" fill="#777"/></g></svg>
<div class="t" style="left:2710.60px;top:590.00px;font-size:23px;font-weight:normal;color:#333;letter-spacing:-0.362px;">of 1</div>
<svg class="r" style="left:2763.5px;top:590px;" width="24" height="18" viewBox="0 0 24 18"><polygon points="0,0 11,9 0,18" fill="#bdbdbd"/><polygon points="11,0 22,9 11,18" fill="#bdbdbd"/></svg>
<svg class="r" style="left:2802.5px;top:590px;" width="24" height="18" viewBox="0 0 24 18"><polygon points="0,0 10,9 0,18" fill="#bdbdbd"/><polygon points="9,0 19,9 9,18" fill="#bdbdbd"/><rect x="19.5" y="0" width="3.5" height="18" fill="#bdbdbd"/></svg>
</body></html>
